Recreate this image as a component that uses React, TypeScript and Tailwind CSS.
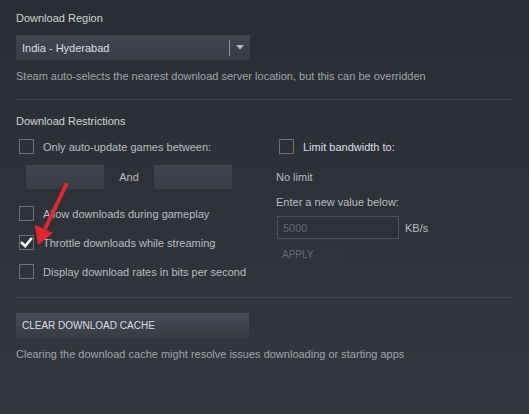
import React from "react";

const CheckBox = ({ checked = false }: { checked?: boolean }) => {
  return (
    <span className="flex h-[15px] w-[15px] shrink-0 items-center justify-center border border-[#6b7078]">
      {checked && (
        <svg width="13" height="13" viewBox="0 0 13 13">
          <path d="M2 7 L5.2 10 L11 3" fill="none" stroke="#ffffff" strokeWidth="2.6" strokeLinecap="square" />
        </svg>
      )}
    </span>
  );
};

const CheckRow = ({ label, checked, bright, className }: { label: string; checked?: boolean; bright?: boolean; className?: string }) => {
  return (
    <div className={`flex h-[15px] items-center gap-[9px] pl-[3px] ${className ?? ""}`}>
      <CheckBox checked={checked} />
      <span className={bright ? "text-[#dcdee2]" : "text-[#b8bcc1]"}>{label}</span>
    </div>
  );
};

const Divider = ({ className }: { className?: string }) => <div className={`h-px w-[497px] bg-[#43474f] ${className ?? ""}`} />;

export default function App() {
  return (
    <div className="relative h-[414px] w-[529px] overflow-hidden bg-gradient-to-b from-[#2a2d33] to-[#33373e] pl-4 pt-[11px] font-['Liberation_Sans',Arial,sans-serif] text-[11px] leading-[14px]">
      <div className="text-[#cfd3d7]">Download Region</div>

      <div className="mt-[10px] flex h-[25px] w-[234px] items-center bg-gradient-to-b from-[#3f4551] to-[#383d48] pl-[6px]">
        <span className="flex-1 text-[#dcdee2]">India - Hyderabad</span>
        <span className="h-[16px] w-px bg-[#8a8f97]" />
        <svg className="mx-[6px]" width="8" height="5" viewBox="0 0 8 5">
          <path d="M0 0 H8 L4 4.5 Z" fill="#b5b9be" />
        </svg>
      </div>

      <div className="mt-[9px] text-[#9ea4ab]">Steam auto-selects the nearest download server location, but this can be overridden</div>

      <Divider className="mt-4" />

      <div className="mt-[14px] text-[#cfd3d7]">Download Restrictions</div>

      <div className="mt-[11px] grid grid-cols-[260px_1fr]">
        <div className="flex flex-col">
          <CheckRow label="Only auto-update games between:" />
          <div className="ml-[10px] mt-[11px] flex h-[24px] items-center">
            <div className="h-full w-[78px] bg-gradient-to-b from-[#3f4551] to-[#383d48]" />
            <span className="w-[50px] text-center text-[#b8bcc1]">And</span>
            <div className="h-full w-[78px] bg-gradient-to-b from-[#3f4551] to-[#383d48]" />
          </div>
          <CheckRow className="mt-[17px]" label="Allow downloads during gameplay" />
          <CheckRow className="mt-[14px]" label="Throttle downloads while streaming" checked />
          <CheckRow className="mt-[14px]" label="Display download rates in bits per second" />
        </div>

        <div className="flex flex-col">
          <CheckRow label="Limit bandwidth to:" bright />
          <div className="mt-4 text-[#b8bcc1]">No limit</div>
          <div className="mt-[11px] text-[#b8bcc1]">Enter a new value below:</div>
          <div className="mt-[7px] flex items-center gap-[6px] pl-px">
            <div className="flex h-[23px] w-[122px] items-center border border-[#4a505c] bg-[#2d3139] pl-[5px] text-[#5f6671]">5000</div>
            <span className="text-[#b8bcc1]">KB/s</span>
          </div>
          <div className="ml-px mt-[7px] h-[23px] w-[69px] bg-[#2f333a] pl-[5px] pt-[2px] text-[10px] text-[#636a75]">APPLY</div>
        </div>
      </div>

      <Divider className="mt-[18px]" />

      <div className="mt-[15px] flex h-[25px] w-[233px] items-center bg-gradient-to-b from-[#454b57] to-[#363b45] pl-[6px] text-[10px] text-[#dcdee2]">
        CLEAR DOWNLOAD CACHE
      </div>

      <div className="mt-[9px] text-[#9ea4ab]">Clearing the download cache might resolve issues downloading or starting apps</div>

      <svg className="absolute left-0 top-0" width="529" height="414" viewBox="0 0 529 414">
        <line x1="67" y1="183" x2="45" y2="229" stroke="#e3262d" strokeWidth="4" />
        <polygon points="38,245 35,225 53,233" fill="#e3262d" />
      </svg>
    </div>
  );
}
